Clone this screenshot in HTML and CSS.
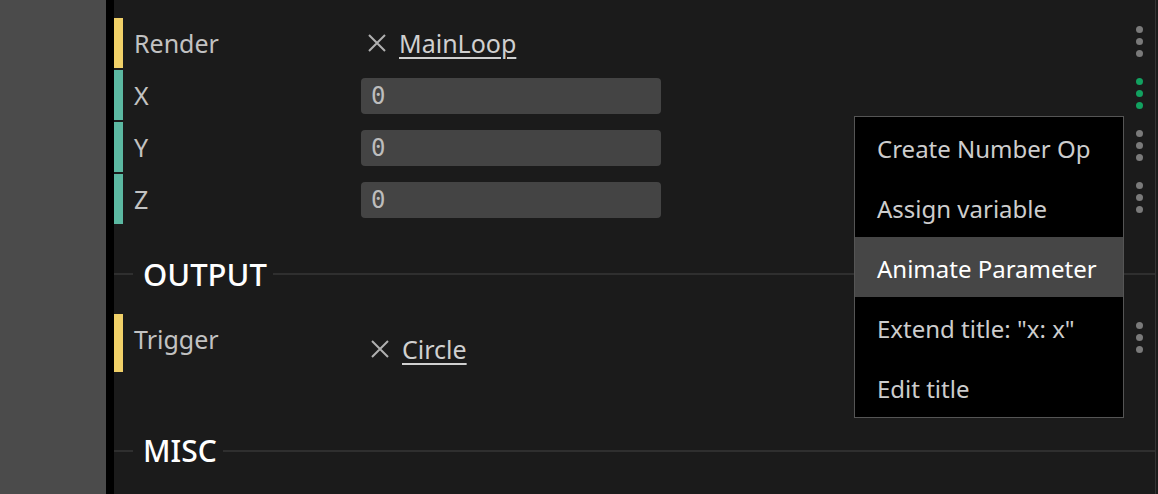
FILE: index.html
```html
<!DOCTYPE html>
<html>
<head>
<meta charset="utf-8">
<link rel="stylesheet" href="styles.css">
</head>
<body>
<div class="app">
  <div class="side"></div>
  <div class="divider"></div>
  <div class="panel">
    <div class="row">
      <div class="bar bar-trigger"></div>
      <div class="label">Render</div>
      <div class="value link-value">
        <svg class="x-icon" width="20" height="20" viewBox="0 0 20 20"><path d="M2 2 L18 18 M18 2 L2 18" stroke="#b0b0b0" stroke-width="2" fill="none"/></svg>
        <span class="link">MainLoop</span>
      </div>
      <div class="dots"><i></i><i></i><i></i></div>
    </div>
    <div class="row">
      <div class="bar bar-number"></div>
      <div class="label">X</div>
      <div class="value"><div class="num">0</div></div>
      <div class="dots green"><i></i><i></i><i></i></div>
    </div>
    <div class="row">
      <div class="bar bar-number"></div>
      <div class="label">Y</div>
      <div class="value"><div class="num">0</div></div>
      <div class="dots"><i></i><i></i><i></i></div>
    </div>
    <div class="row">
      <div class="bar bar-number"></div>
      <div class="label">Z</div>
      <div class="value"><div class="num">0</div></div>
      <div class="dots"><i></i><i></i><i></i></div>
    </div>

    <div class="section section-output">
      <span class="line-left"></span>
      <span class="section-title">OUTPUT</span>
      <span class="line-right"></span>
    </div>

    <div class="row row-tall">
      <div class="bar bar-trigger"></div>
      <div class="label">Trigger</div>
      <div class="value link-value low">
        <svg class="x-icon" width="20" height="20" viewBox="0 0 20 20"><path d="M2 2 L18 18 M18 2 L2 18" stroke="#b0b0b0" stroke-width="2" fill="none"/></svg>
        <span class="link">Circle</span>
      </div>
      <div class="dots"><i></i><i></i><i></i></div>
    </div>

    <div class="section section-misc">
      <span class="line-left"></span>
      <span class="section-title">MISC</span>
      <span class="line-right"></span>
    </div>
  </div>
  <div class="edge"></div>
</div>

<div class="menu">
  <div class="menu-item">Create Number Op</div>
  <div class="menu-item">Assign variable</div>
  <div class="menu-item active">Animate Parameter</div>
  <div class="menu-item">Extend title: "x: x"</div>
  <div class="menu-item">Edit title</div>
</div>
</body>
</html>
```

FILE: styles.css
```css
html, body {
  margin: 0;
  padding: 0;
  height: 100%;
  background: #1b1b1b;
  overflow: hidden;
}
body {
  font-family: "Noto Sans", "Open Sans", sans-serif;
  position: relative;
}
.app {
  display: flex;
  height: 494px;
}
.side {
  width: 106px;
  background: #4b4b4b;
  flex: none;
}
.divider {
  width: 8px;
  background: #000;
  flex: none;
}
.panel {
  width: 1041px;
  flex: none;
  border-right: 1px solid #343434;
  background: #1b1b1b;
  padding-top: 18px;
  box-sizing: content-box;
}
.edge {
  flex: 1;
  background: #1c1c1c;
}
.row {
  display: flex;
  height: 50px;
  margin-bottom: 2px;
}
.row-tall {
  height: 58px;
}
.bar {
  width: 9px;
  flex: none;
}
.bar-trigger { background: #f0d068; }
.bar-number { background: #5bb8a1; }
.label {
  width: 227px;
  margin-left: 11px;
  flex: none;
  height: 50px;
  line-height: 51px;
  font-size: 25px;
  color: #c2c2c2;
}
.value {
  flex: 1;
  display: flex;
  align-items: flex-start;
}
.num {
  margin-top: 8px;
  width: 300px;
  height: 36px;
  box-sizing: border-box;
  background: #444;
  border-radius: 4px;
  padding-left: 10px;
  font-family: "DejaVu Sans Mono", monospace;
  font-size: 24px;
  line-height: 36px;
  color: #bdbdbd;
}
.link-value {
  align-items: center;
  height: 50px;
  padding-left: 6px;
}
.link-value.low {
  padding-top: 10px;
  padding-left: 9px;
}
.x-icon {
  flex: none;
  margin-right: 12px;
}
.link {
  font-size: 25px;
  color: #d0d0d0;
  text-decoration: underline;
  text-underline-offset: 4px;
  text-decoration-thickness: 2px;
}
.dots {
  width: 7px;
  margin-right: 12px;
  padding-top: 8px;
  display: flex;
  flex-direction: column;
  gap: 5px;
  flex: none;
}
.dots i {
  display: block;
  width: 7px;
  height: 7px;
  border-radius: 50%;
  background: #7a7a7a;
}
.dots.green i {
  background: #12a160;
}
.section {
  display: flex;
  align-items: center;
  height: 40px;
}
.section-output {
  margin-top: 30px;
  margin-bottom: 20px;
}
.section-misc {
  margin-top: 59px;
}
.line-left {
  width: 19px;
  height: 2px;
  background: #2f2f2f;
  flex: none;
}
.line-right {
  flex: 1;
  height: 2px;
  background: #2f2f2f;
}
.section-title {
  font-size: 31px;
  font-weight: 500;
  color: #fff;
  padding: 0 6px 0 10px;
  line-height: 40px;
}
.section-misc .section-title {
  font-size: 30px;
}
.menu {
  position: absolute;
  left: 854px;
  top: 116px;
  width: 268px;
  background: #000;
  border: 1px solid #555;
}
.menu-item {
  height: 60px;
  line-height: 63px;
  padding-left: 22px;
  font-size: 24px;
  color: #cdcdcd;
}
.menu-item.active {
  background: #464646;
  color: #fff;
}
```
